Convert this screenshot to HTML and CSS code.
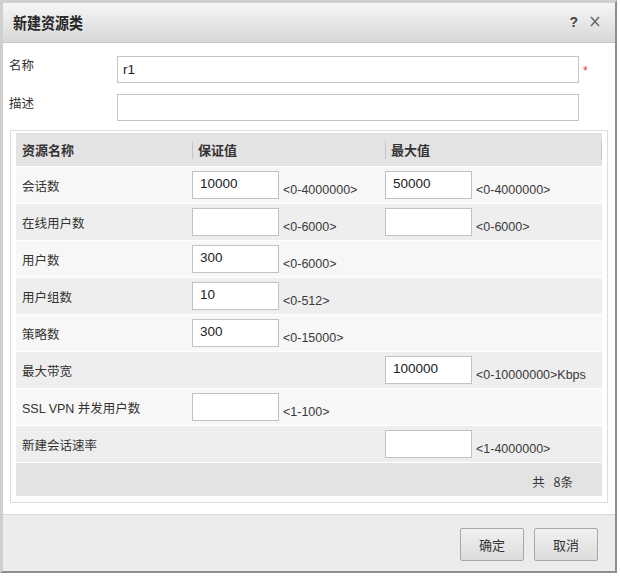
FILE: index.html
```html
<!DOCTYPE html>
<html lang="zh-CN">
<head>
<meta charset="utf-8">
<title>新建资源类</title>
<link rel="stylesheet" href="styles.css">
</head>
<body>
<div class="dialog">
  <div class="titlebar">
    <span class="title">新建资源类</span>
    <span class="tools">
      <span class="help">?</span>
      <svg class="close" width="10" height="11" viewBox="0 0 10 11"><path d="M1 1 L9 10 M9 1 L1 10" stroke="#6a6a6a" stroke-width="1.6" fill="none"/></svg>
    </span>
  </div>
  <div class="body">
    <div class="field">
      <span class="flabel">名称</span>
      <input class="finput" type="text" value="r1">
      <span class="req">*</span>
    </div>
    <div class="field">
      <span class="flabel">描述</span>
      <input class="finput" type="text" value="">
    </div>
    <div class="panel">
      <div class="grow head">
        <div class="hcell">资源名称</div>
        <div class="hcell"><span class="sep"></span>保证值</div>
        <div class="hcell"><span class="sep"></span>最大值<span class="sep end"></span></div>
      </div>
      <div class="grow odd">
        <div class="cell name">会话数</div>
        <div class="cell"><input class="num" type="text" value="10000"><span class="range">&lt;0-4000000&gt;</span></div>
        <div class="cell"><input class="num" type="text" value="50000"><span class="range">&lt;0-4000000&gt;</span></div>
      </div>
      <div class="grow even">
        <div class="cell name">在线用户数</div>
        <div class="cell"><input class="num" type="text" value=""><span class="range">&lt;0-6000&gt;</span></div>
        <div class="cell"><input class="num" type="text" value=""><span class="range">&lt;0-6000&gt;</span></div>
      </div>
      <div class="grow odd">
        <div class="cell name">用户数</div>
        <div class="cell"><input class="num" type="text" value="300"><span class="range">&lt;0-6000&gt;</span></div>
        <div class="cell"></div>
      </div>
      <div class="grow even">
        <div class="cell name">用户组数</div>
        <div class="cell"><input class="num" type="text" value="10"><span class="range">&lt;0-512&gt;</span></div>
        <div class="cell"></div>
      </div>
      <div class="grow odd">
        <div class="cell name">策略数</div>
        <div class="cell"><input class="num" type="text" value="300"><span class="range">&lt;0-15000&gt;</span></div>
        <div class="cell"></div>
      </div>
      <div class="grow even">
        <div class="cell name">最大带宽</div>
        <div class="cell"></div>
        <div class="cell"><input class="num" type="text" value="100000"><span class="range">&lt;0-10000000&gt;Kbps</span></div>
      </div>
      <div class="grow odd">
        <div class="cell name">SSL VPN 并发用户数</div>
        <div class="cell"><input class="num" type="text" value=""><span class="range">&lt;1-100&gt;</span></div>
        <div class="cell"></div>
      </div>
      <div class="grow even">
        <div class="cell name">新建会话速率</div>
        <div class="cell"></div>
        <div class="cell"><input class="num" type="text" value=""><span class="range">&lt;1-4000000&gt;</span></div>
      </div>
      <div class="tfoot">共 8条</div>
    </div>
  </div>
  <div class="footer">
    <button class="btn" type="button">确定</button>
    <button class="btn" type="button">取消</button>
  </div>
</div>
</body>
</html>
```
FILE: styles.css
```css
* { box-sizing: border-box; }
html, body { margin: 0; padding: 0; }
body {
  background: #ffffff;
  font-family: "Liberation Sans", "Noto Sans CJK SC", sans-serif;
  font-size: 12.5px;
  color: #333;
}
.dialog {
  box-sizing: content-box;
  width: 612px;
  height: 568px;
  border-style: solid;
  border-width: 3px 2px 2px 3px;
  border-color: #d0d0d0 #8e8e8e #8e8e8e #cfcfcf;
  display: flex;
  flex-direction: column;
  background: #fff;
}
.titlebar {
  height: 40px;
  flex: none;
  border-bottom: 1px solid #c9c9c9;
  background: linear-gradient(#f6f6f6, #d8d8d8);
  display: flex;
  align-items: center;
  justify-content: space-between;
  padding: 0 15px 2px 10px;
}
.title {
  display: inline-block;
  font-family: "Noto Sans CJK SC", sans-serif;
  font-weight: 700;
  font-size: 14px;
  color: #262626;
  transform: scaleY(1.15);
}
.tools { display: flex; align-items: center; gap: 12px; }
.help {
  font-weight: 700;
  font-size: 14px;
  color: #444;
}
.close { display: block; }
.body {
  height: 472px;
  flex: none;
  border-bottom: 1px solid #d9d9d9;
  padding: 13px 7px 0 6px;
  display: flex;
  flex-direction: column;
}
.field {
  display: flex;
  align-items: flex-start;
  margin-bottom: 11px;
}
.flabel {
  width: 108px;
  line-height: 18px;
  font-family: "Noto Sans CJK SC", sans-serif;
  font-size: 12.5px;
  color: #333;
  flex: none;
}
.finput {
  width: 462px;
  height: 27px;
  border: 1px solid #c4c4c4;
  background: #fff;
  padding: 0 5px;
  font-family: "Liberation Sans", sans-serif;
  font-size: 13.5px;
  color: #222;
  outline: none;
  margin: 0;
}
.req {
  color: #ee3333;
  font-size: 12px;
  margin-left: 4px;
  margin-top: 9px;
  line-height: 12px;
}
.panel {
  margin-top: -2px;
  margin-left: 1px;
  width: 598px;
  border: 1px solid #dcdcdc;
  padding: 2px 5px 6px 5px;
}
.grow {
  display: grid;
  grid-template-columns: 176px 193px 217px;
  height: 37px;
  border-bottom: 1px solid #fff;
}
.grow.head { height: 34px; background: #e3e3e3; }
.grow.odd { background: #f7f7f7; }
.grow.even { background: #eeeeee; }
.hcell {
  display: flex;
  align-items: center;
  padding-left: 6px;
  font-family: "Noto Sans CJK SC", sans-serif;
  font-weight: 700;
  font-size: 13px;
  color: #333;
}
.hcell:not(:first-child) { padding-left: 0; }
.sep {
  width: 1px;
  height: 18px;
  background: #c6c6c6;
  margin-right: 5px;
  flex: none;
}
.sep.end { margin: 0 0 0 auto; }
.cell {
  display: flex;
  align-items: center;
}
.cell.name {
  padding-left: 6px;
  font-size: 12.5px;
  color: #333;
}
.num {
  width: 87px;
  height: 28px;
  border: 1px solid #c2c2c2;
  background: #fff;
  padding: 0 0 3px 7px;
  margin: 0;
  font-family: "Liberation Sans", sans-serif;
  font-size: 13.5px;
  color: #222;
  outline: none;
  flex: none;
}
.range {
  padding-top: 10px;
  margin-left: 4px;
  font-size: 12.5px;
  color: #3a3a3a;
  white-space: nowrap;
}
.tfoot {
  height: 33px;
  background: #e3e3e3;
  display: flex;
  align-items: center;
  justify-content: flex-end;
  padding: 3px 29px 0 0;
  font-family: "Noto Sans CJK SC", sans-serif;
  font-size: 12.5px;
  word-spacing: 6px;
  color: #333;
}
.footer {
  flex: 1;
  background: #ececec;
  display: flex;
  justify-content: flex-end;
  align-items: flex-start;
  gap: 10px;
  padding: 13px 17px 0 0;
}
.btn {
  width: 64px;
  height: 33px;
  border: 1px solid #a8a8a8;
  border-radius: 2px;
  background: linear-gradient(#f1f1f1, #dcdcdc);
  font-family: "Noto Sans CJK SC", sans-serif;
  font-size: 13px;
  color: #333;
  padding: 0;
  margin: 0;
}
```
